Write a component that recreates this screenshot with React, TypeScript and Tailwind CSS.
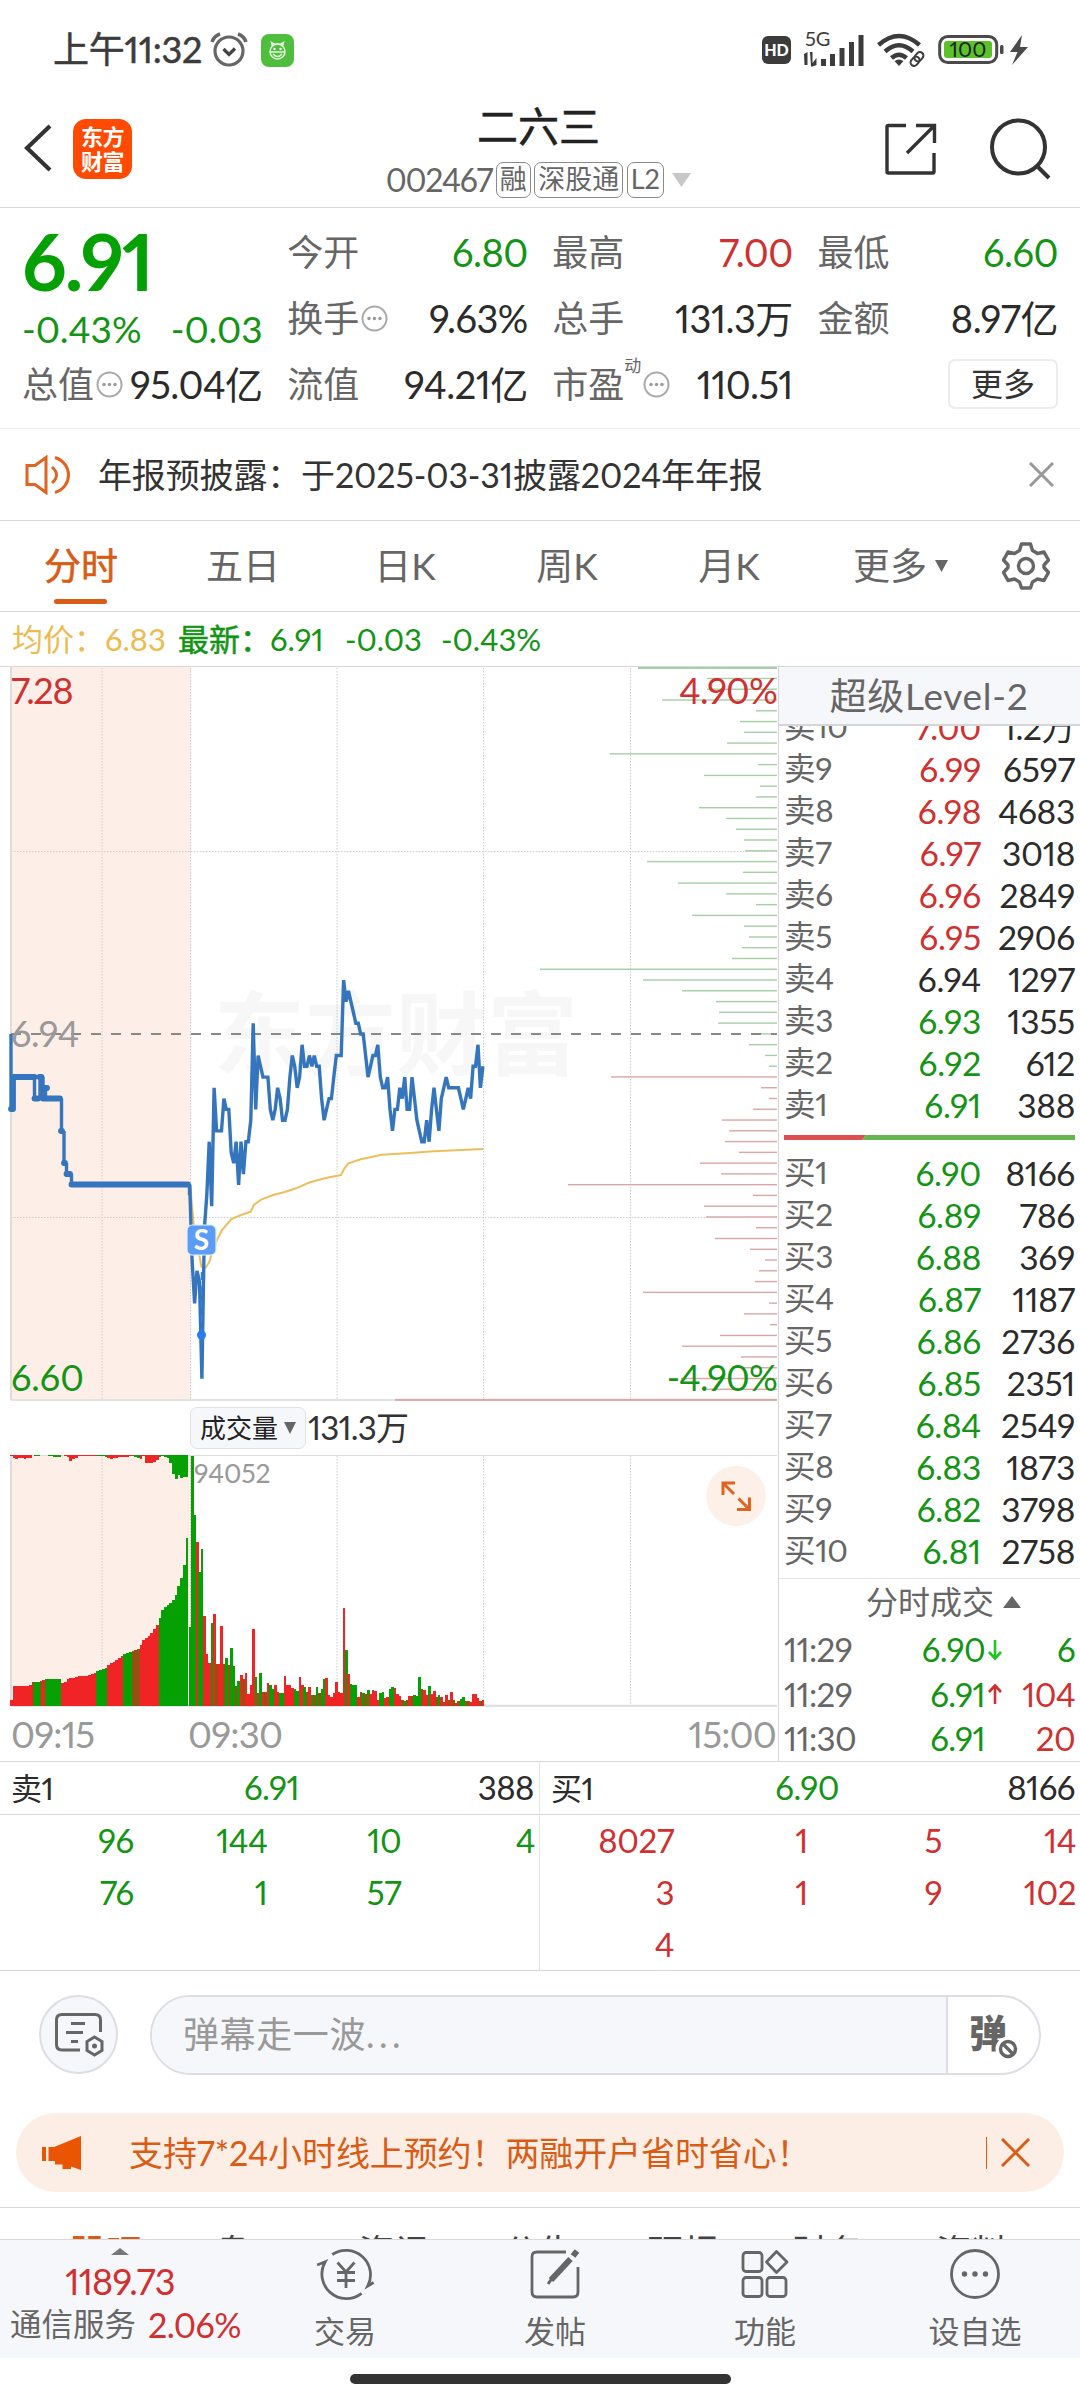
import type { ReactNode } from 'react'
import clsx from 'clsx'

type Tone = 'up' | 'down' | 'flat'

const TONE: Record<Tone, string> = {
  up: 'text-[#d0302f]',
  down: 'text-[#149414]',
  flat: 'text-[#2b2b2b]',
}

const UP = '#f02424'
const DOWN = '#04a004'
const MIXED = '#96500f'

// one price per minute from 09:30 to 11:30, in cents
const PRICES = [
  680, 673, 669, 672, 671, 662, 676, 679, 684, 678, 689, 685, 685, 685, 688, 687, 687, 683, 682, 684, 680, 684, 681, 684,
  684, 686, 695, 687, 692, 691, 690, 690, 690, 687, 686, 687, 689, 688, 686, 686, 687, 690, 692, 691, 689, 690, 693, 691,
  691, 692, 691, 692, 691, 691, 688, 686, 687, 688, 688, 690, 692, 692, 692, 699, 697, 698, 697, 696, 695, 695, 694, 694,
  692, 690, 691, 692, 692, 693, 690, 689, 689, 690, 687, 685, 687, 687, 689, 688, 690, 687, 687, 690, 688, 686, 685, 684,
  684, 686, 684, 687, 689, 687, 685, 688, 689, 690, 689, 689, 689, 689, 689, 688, 687, 688, 689, 688, 691, 691, 693, 689,
  691,
]

const AVERAGE =
  '190.4,1186.7 193.5,1223 198,1248 201.4,1266.7 205.6,1267.7 209.4,1261.7 212.8,1250 217,1240 222,1230 231.4,1219 241,1215 250.7,1211.7 253.8,1205 261.7,1199.3 273.8,1194.7 284,1192.3 296,1188.3 310,1182.3 327,1177.7 341,1175 344.4,1168.3 348.5,1163.3 361.6,1159 382,1154.7 410,1153 434,1151.3 461.4,1150 483,1149'

// volume at price, one bar per cent, top to bottom
const CHIPS = [
  139, 70, 70, 115, 21, 37, 33, 50, 167, 19, 73, 17, 21, 78, 51, 41, 33, 32, 130, 34, 99, 51, 21, 85, 33, 28, 35, 45,
  237, 134, 95, 61, 58, 59, 26, 28, 12, 8, 166, 16, 8, 24, 55, 48, 52, 38, 77, 56, 209, 24, 73, 71, 21, 62, 27, 12, 18,
  22, 134, 8, 33, 7, 57, 95, 36, 36, 96, 70, 382,
]

// r = up, g = down, b = overlap
const VOLUMES =
  'g79 g250 g191 r164 g134 g157 r90 r52 r43 g83 r92 b42 r42 r80 b42 g48 b41 g58 g40 b20 g25 r31 b27 r33 r12 r21 r77 g29 r13 g33 r14 b14 r23 g21 g17 r21 r14 g13 g13 r30 r21 r21 r18 g17 g15 r29 r21 g19 b14 r19 g11 b11 g19 b13 g17 g27 r28 r11 r9 r13 r24 r14 r13 r98 g56 r32 g22 g21 g21 r9 b14 g13 b12 g16 r12 r16 r15 r6 g13 g14 r8 r9 g17 g19 r18 r12 r10 b6 g5 b6 r10 b10 g11 g10 g29 b17 r16 r11 g20 r12 r15 b9 g11 r9 b4 r11 b6 r14 b6 r3 b5 g7 g9 b5 b5 r4 r12 r12 r8 b5 r6'
const PRE_VOLUMES =
  'r6 r20 r20 r20 r20 r20 r20 r21 b24 g24 g24 b25 r26 g27 g27 g27 g27 g27 g27 r23 r24 r27 r28 r28 r29 r30 r30 r30 r30 r31 r32 r33 g35 g36 g37 g38 r41 r43 r44 r46 r48 r50 g52 g53 g54 b55 b56 b57 r61 r66 r68 r70 r73 r77 r81 g88 g96 g99 g101 g103 g106 g111 g120 g128 g141 g168'
const PRE_UNMATCHED =
  'r1 r3 r4 r3 r3 r4 r3 r3 r0 g1 g1 g0 g0 g0 g1 g1 g2 g2 g2 r0 r1 r2 r6 r4 r3 r1 r1 r1 r1 r1 r1 r1 g1 g1 g1 g2 r3 r4 r3 r3 r2 r2 r2 r2 r1 r1 g2 g3 r4 r1 r8 r8 r8 r7 r5 g2 g1 g2 g3 g8 g19 g24 g20 g23 g22 g22'

const bars = (s: string) =>
  s.split(' ').map((b) => ({ fill: b[0] === 'r' ? UP : b[0] === 'g' ? DOWN : MIXED, h: Number(b.slice(1)) }))

const ASKS: [string, string, string, Tone][] = [
  ['卖10', '7.00', '1.2万', 'up'],
  ['卖9', '6.99', '6597', 'up'],
  ['卖8', '6.98', '4683', 'up'],
  ['卖7', '6.97', '3018', 'up'],
  ['卖6', '6.96', '2849', 'up'],
  ['卖5', '6.95', '2906', 'up'],
  ['卖4', '6.94', '1297', 'flat'],
  ['卖3', '6.93', '1355', 'down'],
  ['卖2', '6.92', '612', 'down'],
  ['卖1', '6.91', '388', 'down'],
]

const BIDS: [string, string, string, Tone][] = [
  ['买1', '6.90', '8166', 'down'],
  ['买2', '6.89', '786', 'down'],
  ['买3', '6.88', '369', 'down'],
  ['买4', '6.87', '1187', 'down'],
  ['买5', '6.86', '2736', 'down'],
  ['买6', '6.85', '2351', 'down'],
  ['买7', '6.84', '2549', 'down'],
  ['买8', '6.83', '1873', 'down'],
  ['买9', '6.82', '3798', 'down'],
  ['买10', '6.81', '2758', 'down'],
]

function StatusBar() {
  return (
    <div className="flex h-[100px] items-center pl-[53px] pr-[50px] text-[#3c3c3c]">
      <span className="-mt-[2px] text-[36px] tracking-[-0.2px] [-webkit-text-stroke:0.5px]">上午11:32</span>
      <svg className="ml-[8px] -mt-[1px]" width="38" height="36" viewBox="0 0 38 36" fill="none" stroke="#666" strokeWidth="3.2">
        <circle cx="19" cy="19" r="14" />
        <path d="M2 10Q4 4 10 2M36 10Q34 4 28 2" strokeWidth="3.6" />
        <path d="M13.500 17L19 22.500L25 16.500" stroke="#444" />
      </svg>
      <svg className="ml-[13px]" width="33" height="33" viewBox="0 0 33 33" fill="none">
        <rect width="33" height="33" rx="8" fill="#4fbe3c" />
        <g stroke="#e4f7df" strokeWidth="1.500">
          <path d="M11.500 12L10.500 8.500l3.500 2q2.500-1 5 0l3.500-2-1 3.500" />
          <circle cx="16.500" cy="17.500" r="7.500" />
          <path d="M9.500 18h14M12 20q4.500 5 9 0" />
        </g>
        <circle cx="13.500" cy="15" r="1.200" fill="#fff" />
        <circle cx="19.500" cy="15" r="1.200" fill="#fff" />
      </svg>
      <span className="ml-auto flex h-[28px] w-[29px] items-center justify-center rounded-[6px] bg-[#3c3c3c] text-[16px] font-black text-white">
        HD
      </span>
      <svg className="ml-[13px] overflow-visible" width="60" height="34" viewBox="0 0 60 34" fill="#3c3c3c">
        <text x="1" y="13" fontSize="20">
          5G
        </text>
        <path d="M0 21l3.500-2v13h-3zM6 19h2.500v11l4-5v7l-4 1.500H7zM17 26h5v7h-5zM26 21h5v12h-5zM35.500 15h5v18h-5zM45 9h5v24h-5zM54.500 2h5v31h-5z" />
      </svg>
      <svg className="ml-[13px]" width="48" height="34" viewBox="0 0 48 34" fill="none" stroke="#3c3c3c" strokeWidth="4.500">
        <path d="M1.500 12Q22 -6 42.500 12" />
        <path d="M8 18.500Q22 6 36 18.500" />
        <path d="M14.500 25Q22 18.500 29.500 25" />
        <path d="M22 33l-4.500-5q4.500-3 9 0z" fill="#3c3c3c" stroke="none" />
        <g strokeWidth="2" transform="rotate(-50 40 26)">
          <rect x="32" y="22.500" width="10" height="7" rx="3.500" />
          <rect x="38" y="22.500" width="10" height="7" rx="3.500" />
        </g>
      </svg>
      <svg className="ml-[13px]" width="92" height="32" viewBox="0 0 92 32">
        <rect x="1.700" y="2.500" width="57" height="26" rx="8" fill="#fff" stroke="#4a4a4a" strokeWidth="3" />
        <rect x="6" y="7" width="48" height="17" rx="3" fill="#5cc22c" />
        <rect x="62" y="11" width="3.500" height="9" rx="1.500" fill="#4a4a4a" />
        <text x="30" y="23" fontSize="21.500" textAnchor="middle" fill="#222">
          100
        </text>
        <path d="M84 1L72 18h7.500L74 31L90 13h-8z" fill="#4a4a4a" />
      </svg>
    </div>
  )
}

function Badge({ children }: { children: ReactNode }) {
  return (
    <span className="flex h-[36px] items-center rounded-[7px] border border-[#8a8a8a] px-[3px] text-[27px]">{children}</span>
  )
}

function Header() {
  return (
    <header className="flex h-[108px] items-center border-b border-[#d8d8d8] pl-[24px] pr-[27px]">
      <svg className="mt-[-11px]" width="28" height="48" viewBox="0 0 28 48" fill="none" stroke="#333" strokeWidth="4.200">
        <path d="M26 2L3 24L26 46" />
      </svg>
      <div className="ml-[21px] mt-[-9px] flex h-[60px] w-[59px] flex-col items-center justify-center rounded-[13px] bg-[#ff4a04] text-[22px] leading-[25px] font-bold tracking-[-0.5px] text-white">
        <span>东方</span>
        <span>财富</span>
      </div>
      <div className="mt-[-6px] flex flex-1 flex-col items-center gap-[4px] pl-[60px]">
        <h1 className="text-[41px] leading-[54px] text-[#222] [-webkit-text-stroke:0.5px]">二六三</h1>
        <div className="flex h-[44px] items-center gap-[3.500px] text-[#666]">
          <span className="text-[32px] tracking-[-1.2px]">002467</span>
          <Badge>融</Badge>
          <Badge>深股通</Badge>
          <Badge>L2</Badge>
          <svg className="ml-[5px]" width="19" height="14" viewBox="0 0 19 14">
            <path d="M0 0h19L9.500 14z" fill="#c8c8c8" />
          </svg>
        </div>
      </div>
      <svg className="mt-[-10px]" width="52" height="52" viewBox="0 0 52 52" fill="none" stroke="#333" strokeWidth="3.400">
        <path d="M21 2.500H3.500Q2 2.500 2 4v44.500q0 1.500 1.500 1.500h44q1.500 0 1.500-1.500V30" />
        <path d="M31 2.500h18.500V20M49 3L22 30" />
      </svg>
      <svg className="mt-[-10px] ml-[52px]" width="64" height="64" viewBox="0 0 64 64" fill="none" stroke="#333" strokeWidth="4">
        <circle cx="29.500" cy="30" r="26.500" />
        <path d="M48 49l12 12" />
      </svg>
    </header>
  )
}

function Dots() {
  return (
    <svg className="mx-[2px]" width="27" height="27" viewBox="0 0 27 27">
      <circle cx="13.500" cy="13.500" r="12" fill="none" stroke="#aaa" strokeWidth="2" />
      <circle cx="8" cy="13.500" r="1.700" fill="#999" />
      <circle cx="13.500" cy="13.500" r="1.700" fill="#999" />
      <circle cx="19" cy="13.500" r="1.700" fill="#999" />
    </svg>
  )
}

function Stat({ label, value, tone = 'flat', dots, sup }: { label: string; value: string; tone?: Tone; dots?: boolean; sup?: string }) {
  return (
    <div className="flex h-[66px] items-center">
      <span className="text-[36px] text-[#666]">{label}</span>
      {sup && <span className="-mt-[36px] text-[17px] text-[#666]">{sup}</span>}
      {dots && <Dots />}
      <span className={clsx('ml-auto text-[38px] tracking-[-0.5px]', TONE[tone])}>{value}</span>
    </div>
  )
}

function Summary() {
  return (
    <section className="grid h-[221px] grid-cols-4 gap-[24.500px] border-b border-[#ebebeb] pt-[11px] pl-[22px] pr-[22px]">
      <div className="text-[#04a004]">
        <div className="-mt-[2px] h-[90px] text-[78px] leading-[88px] font-bold tracking-[-2px]">6.91</div>
        <div className="flex h-[44px] items-center justify-between text-[37px] text-[#149414]">
          <span>-0.43%</span>
          <span>-0.03</span>
        </div>
        <Stat label="总值" value="95.04亿" dots />
      </div>
      <div>
        <Stat label="今开" value="6.80" tone="down" />
        <Stat label="换手" value="9.63%" dots />
        <Stat label="流值" value="94.21亿" />
      </div>
      <div>
        <Stat label="最高" value="7.00" tone="up" />
        <Stat label="总手" value="131.3万" />
        <Stat label="市盈" value="110.51" sup="动" dots />
      </div>
      <div>
        <Stat label="最低" value="6.60" tone="down" />
        <Stat label="金额" value="8.97亿" />
        <div className="flex h-[66px] items-center justify-end">
          <button className="h-[50px] w-[110px] rounded-[7px] border-2 border-[#ececec] text-[32px] leading-[44px] text-[#333]">更多</button>
        </div>
      </div>
    </section>
  )
}

function Notice() {
  return (
    <section className="flex h-[92px] items-center border-b border-[#d8d8d8] pl-[25px] pr-[26px]">
      <svg width="46" height="40" viewBox="0 0 46 40" fill="none" stroke="#de6420" strokeWidth="3">
        <path d="M2 10.500h8L21 2.500v35L10 29.500H2z" />
        <path d="M27 12q9 8 0 16M30 2.500c18 6 18 29 0 35" />
      </svg>
      <span className="-mt-[1px] ml-[27px] text-[34px] tracking-[-0.15px] text-[#333]">年报预披露：于2025-03-31披露2024年年报</span>
      <svg className="ml-auto" width="25" height="25" viewBox="0 0 25 25" stroke="#999" strokeWidth="3">
        <path d="M1 1l23 23M24 1L1 24" />
      </svg>
    </section>
  )
}

const PERIODS = ['分时', '五日', '日K', '周K', '月K']

function PeriodTabs() {
  return (
    <nav className="flex h-[91px] items-center border-b border-[#d8d8d8] text-[37px] text-[#666]">
      {PERIODS.map((p, i) => (
        <div
          key={p}
          className={clsx(
            'relative flex h-full w-[162px] items-center justify-center',
            i === 0 && 'text-[#d95c16] [-webkit-text-stroke:0.6px]',
          )}
        >
          {p}
          {i === 0 && <i className="absolute bottom-[7px] left-[54px] h-[5px] w-[53px] rounded-full bg-[#d95c16]" />}
        </div>
      ))}
      <div className="ml-[43px] flex items-center">
        更多
        <svg className="ml-[8px]" width="13" height="12" viewBox="0 0 13 12">
          <path d="M0 0h13L6.500 12z" fill="#666" />
        </svg>
      </div>
      <svg className="ml-auto mr-[30px]" width="48" height="48" viewBox="0 0 48 48" fill="none" stroke="#666" strokeWidth="3.400" strokeLinejoin="round">
        <path d="M19.500 2h9l2 6.500 5 3 6.500-1.500 4.500 8-4.500 5v2.500l4.500 5-4.500 8-6.500-1.500-5 3-2 6h-9l-2-6-5-3-6.500 1.500-4.500-8 4.500-5V23l-4.500-5 4.500-8 6.500 1.500 5-3z" />
        <circle cx="24" cy="24" r="7.500" />
      </svg>
    </nav>
  )
}

function PriceChart() {
  const line = PRICES.map((p, i) => `${(189.7 + i * 2.443).toFixed(1)},${(1034 + (694 - p) * 10.77).toFixed(1)}`).join(' ')
  return (
    <svg className="block" width="778" height="734" viewBox="0 667 778 734">
      <rect x="11" y="667" width="180" height="733" fill="#fdeee7" />
      <text x="214" y="1068" fontSize="91" fontWeight="700" fill="#f7f7f7">
        东方财富
      </text>
      <g stroke="#ccc" strokeDasharray="1.500 1.500">
        {[102, 190.5, 337, 483.5, 630.5].map((x) => (
          <path key={x} d={`M${x} 668V1399`} />
        ))}
        <path d="M11 851.500H777M11 1217.500H777" />
      </g>
      <path d="M11 667V1400" stroke="#ddd" strokeWidth="2" />
      <path d="M11 1400H777" stroke="#e2e2e2" strokeWidth="2" />
      {CHIPS.map((w, i) => (
        <rect
          key={i}
          x={777 - w}
          y={667.5 + i * 10.77 - (i === 68 ? 1 : 0.5)}
          width={w}
          height={i === 0 || i === 68 ? 2 : 1.4}
          fill={i < 38 ? '#a5cfa5' : '#dca6a6'}
        />
      ))}
      <path d="M11 1034H777" stroke="#888" strokeWidth="2" strokeDasharray="10 10" />
      <g fontSize="36" letterSpacing="-0.800">
        <text x="11" y="704" fill="#d0302f" letterSpacing="-1.300">7.28</text>
        <text x="777" y="704" fill="#d0302f" textAnchor="end">4.90%</text>
        <text x="11" y="1047" fill="#999" letterSpacing="-0.300">6.94</text>
        <text x="11" y="1391" fill="#149414" letterSpacing="0">6.60</text>
        <text x="777" y="1391" fill="#149414" textAnchor="end">-4.90%</text>
      </g>
      <polyline points={AVERAGE} fill="none" stroke="#ecbf5c" strokeWidth="2" />
      <g fill="none" stroke="#3575bd" strokeLinejoin="round">
        <polyline points={line} strokeWidth="3.400" strokeLinejoin="miter" strokeMiterlimit="2" />
        <path
          d="M11 1034V1109M34.500 1077V1098.500M40 1077V1098M43 1098V1077M45.500 1088V1098.500M61.500 1098.500V1131M64 1131V1163M66.500 1163V1174M71.500 1174V1184M189.500 1184V1195"
          strokeWidth="3.400"
        />
        <path
          d="M11 1109H13V1077H34.500M34.500 1098.500H38M39.500 1077H41.500M45 1088H47M43 1098.500H60M61 1131H62M64 1163H65M66.500 1174H70M71.500 1184.500H188"
          strokeWidth="5.800"
          strokeLinecap="round"
        />
      </g>
      <path d="M201.500 1272V1335" stroke="#2f7ff0" strokeWidth="1.500" strokeDasharray="8 6" />
      <circle cx="201.500" cy="1335" r="4.500" fill="#2a7bf0" />
      <rect x="187" y="1225" width="29" height="30" rx="5" fill="#5b9cf6" stroke="#e5effd" strokeWidth="1.200" />
      <text x="201.500" y="1250" fontSize="28" fontWeight="700" fill="#fff" textAnchor="middle">
        S
      </text>
    </svg>
  )
}

function VolumeChart() {
  return (
    <svg className="block" width="778" height="252" viewBox="0 1455 778 252">
      <rect x="11" y="1455" width="180" height="251" fill="#fdeee7" />
      <g stroke="#ccc" strokeDasharray="1.500 1.500">
        {[102, 190.5, 337, 483.5, 630.5].map((x) => (
          <path key={x} d={`M${x} 1456V1705`} />
        ))}
      </g>
      <path d="M11 1455.500H777" stroke="#ddd" />
      <path d="M11 1705.800H777" stroke="#ddd" strokeWidth="2" />
      <path d="M11 1455V1706" stroke="#ddd" strokeWidth="2" />
      <g shapeRendering="crispEdges">
        {bars(PRE_VOLUMES).map((b, i) => (
          <rect key={i} x={10 + i * 2.7} y={1706 - b.h} width="2.800" height={b.h} fill={b.fill} />
        ))}
        {bars(PRE_UNMATCHED).map((b, i) => (
          <rect key={i} x={10 + i * 2.7} y="1455" width="2.800" height={b.h} fill={b.fill} />
        ))}
        {bars(VOLUMES).map((b, i) => (
          <rect key={i} x={188.6 + i * 2.443} y={1706 - b.h} width="2.600" height={b.h} fill={b.fill} />
        ))}
      </g>
      <text x="194" y="1483" fontSize="26.500" fill="#999" letterSpacing="-0.100">
        94052
      </text>
      <circle cx="736" cy="1496" r="30" fill="#fdf0e9" />
      <g fill="none" stroke="#de6420" strokeWidth="3">
        <path d="M735 1483h-12v12M724 1484l10 10M737 1509.500h12.500v-12M748.500 1508.500l-10-10" />
      </g>
    </svg>
  )
}

function BookRow({ row }: { row: [string, string, string, Tone] }) {
  const [label, price, qty, tone] = row
  return (
    <div className="flex h-[42px] shrink-0 items-center pl-[5px] pr-[5px] text-[33.500px] tracking-[-0.3px]">
      <span className="w-[80px] text-[31.500px] text-[#666]">{label}</span>
      <span className={clsx('w-[117px] text-right', TONE[tone])}>{price}</span>
      <span className="flex-1 text-right text-[#2b2b2b]">{qty}</span>
    </div>
  )
}

function Trade({ time, price, qty, tone, dir }: { time: string; price: string; qty: string; tone: Tone; dir?: 'up' | 'down' }) {
  return (
    <div className="flex h-[44.500px] items-center pb-[1px] pl-[5px] pr-[5px] text-[33px] tracking-[-0.6px]">
      <span className="w-[80px] text-[#666]">{time}</span>
      <span className="w-[121px] text-right text-[#149414]">{price}</span>
      <svg className="ml-[3px]" width="14" height="22" viewBox="0 0 14 22" fill="none" strokeWidth="2.600">
        {dir === 'down' && <path d="M7 1v18M1 13l6 6.500 6-6.500" stroke="#22c322" />}
        {dir === 'up' && <path d="M7 21V3M1 9l6-6.500L13 9" stroke="#d0302f" />}
      </svg>
      <span className={clsx('flex-1 text-right', TONE[tone])}>{qty}</span>
    </div>
  )
}

function OrderBook() {
  return (
    <aside className="flex h-[1094px] w-[302px] flex-col border-l border-[#d4d6da]">
      <div className="h-[59px] shrink-0 border-b-2 border-[#d4d6da] bg-[#f6f7fa] pr-[1px] text-center text-[37px] leading-[57px] tracking-[0.7px] text-[#666]">
        超级Level-2
      </div>
      <div className="flex h-[400px] shrink-0 flex-col justify-end overflow-hidden">
        {ASKS.map((r) => (
          <BookRow key={r[0]} row={r} />
        ))}
      </div>
      <div className="h-[26px] shrink-0 px-[5px] pt-[9px]">
        <svg className="block" width="291" height="5" viewBox="0 0 291 5">
          <path d="M0 0H82L78 5H0z" fill="#db4f4f" />
          <path d="M82 0H291V5H78z" fill="#65b550" />
        </svg>
      </div>
      {BIDS.map((r) => (
        <BookRow key={r[0]} row={r} />
      ))}
      <div className="mt-[6px] flex h-[50px] shrink-0 items-center justify-center border-t border-[#e4e4e4] pb-[3px] pl-[28px] text-[32px] text-[#666]">
        分时成交
        <svg className="ml-[9px]" width="18" height="12" viewBox="0 0 18 12">
          <path d="M9 0L18 12H0z" fill="#666" />
        </svg>
      </div>
      <Trade time="11:29" price="6.90" qty="6" tone="down" dir="down" />
      <Trade time="11:29" price="6.91" qty="104" tone="up" dir="up" />
      <Trade time="11:30" price="6.91" qty="20" tone="up" />
    </aside>
  )
}

function ChartArea() {
  return (
    <section className="border-b border-[#d8d8d8]">
      <div className="flex h-[55px] items-center border-b border-[#d8d8d8] pl-[12px] text-[31px] whitespace-pre">
        <span className="w-[166px] text-[#ecbc50]">均价：6.83</span>
        <span className="w-[92px] text-[#149414] [-webkit-text-stroke:0.5px]">最新：</span>
        <span className="w-[75px] text-[#149414]">6.91</span>
        <span className="w-[96px] text-[#149414]">-0.03</span>
        <span className="text-[#149414]">-0.43%</span>
      </div>
      <div className="flex">
        <div className="w-[778px]">
          <PriceChart />
          <div className="flex h-[54px] items-center pl-[190px]">
            <div className="flex h-[42px] w-[116px] items-center justify-between rounded-[7px] border border-[#e0e2e6] bg-[#f6f7fa] pl-[9px] pr-[9px] text-[26px] text-[#222]">
              成交量
              <svg width="12" height="12" viewBox="0 0 12 12">
                <path d="M0 0h12L6 12z" fill="#666" />
              </svg>
            </div>
            <span className="ml-[2px] text-[33px] tracking-[-0.8px] text-[#333]">131.3万</span>
          </div>
          <VolumeChart />
          <div className="flex h-[54px] items-center pl-[11px] pr-[2px] text-[36.500px] tracking-[-0.8px] text-[#999]">
            <span className="w-[177px]">09:15</span>
            <span>09:30</span>
            <span className="ml-auto">15:00</span>
          </div>
        </div>
        <OrderBook />
      </div>
    </section>
  )
}

function Queue({ side, price, total, tone, orders }: { side: string; price: string; total: string; tone: Tone; orders: string[] }) {
  return (
    <div className="h-[208px] w-[540px]">
      <div className="flex h-[53px] items-center border-b border-[#d8d8d8] pl-[11px] pr-[5px] text-[33px] tracking-[-0.5px] text-[#2b2b2b]">
        <span className="w-[180px] text-[31px]">{side}</span>
        <span className="w-[108px] text-right text-[#149414]">{price}</span>
        <span className="flex-1 text-right">{total}</span>
      </div>
      <div className={clsx('-mt-[1px] grid grid-cols-4 pr-[4px] text-right text-[33px] leading-[52px] tracking-[-0.4px]', TONE[tone])}>
        {orders.map((o, i) => (
          <span key={i}>{o}</span>
        ))}
      </div>
    </div>
  )
}

function Comment() {
  return (
    <div className="flex h-[79px] items-center pl-[39px] pr-[39px]">
      <div className="flex h-[79px] w-[79px] items-center justify-center rounded-full border-2 border-[#dcdee3] bg-[#f6f7fa]">
        <svg className="ml-[1px]" width="50" height="46" viewBox="0 0 50 46" fill="none" stroke="#666" strokeWidth="3">
          <path d="M26 38H8q-5.500 0-5.500-5.500V8Q2.500 2.500 8 2.500h33q5.500 0 5.500 5.500v12" />
          <path d="M17 11.500h14M12 20.500h17M17 29.500h7" />
          <path d="M40.500 25l7.500 4.500v9L40.500 43 33 38.500v-9z" />
          <circle cx="40.500" cy="34" r="2.500" fill="#666" stroke="none" />
        </svg>
      </div>
      <div className="ml-[32px] flex h-[80px] flex-1 overflow-hidden rounded-full border-2 border-[#dcdee3]">
        <div className="flex-1 border-r-2 border-[#dcdee3] bg-[#f6f7fa] pl-[31px] text-[36px] leading-[75px] tracking-[0.6px] text-[#999]">
          弹幕走一波<span className="tracking-[4.5px]">...</span>
        </div>
        <div className="relative w-[91px] pl-[21px] text-[38px] leading-[70px] font-black text-[#666]">
          弹
          <svg className="absolute top-[39px] left-[47px]" width="26" height="26" viewBox="0 0 26 26" fill="#fff">
            <circle cx="13" cy="13" r="12.500" />
            <circle cx="13" cy="13" r="7.500" stroke="#666" strokeWidth="3.400" />
            <path d="M8 8l10 10" stroke="#666" strokeWidth="3.400" />
          </svg>
        </div>
      </div>
    </div>
  )
}

function Banner() {
  return (
    <div className="mx-[16px] mt-[39px] flex h-[79px] items-center rounded-full bg-[#fceee5] pl-[26px] pr-[34px] text-[#d95c16]">
      <svg width="40" height="34" viewBox="0 0 40 34" fill="#ea5504">
        <path d="M0 11h4v14H0zM6.500 11H12L39 0v34l-10-3.500V33h-8.500v-4.500H13V25H6.500z" />
      </svg>
      <span className="ml-[47px] text-[34px] tracking-[-0.1px]">支持7*24小时线上预约！两融开户省时省心！</span>
      <i className="ml-auto h-[32px] w-[1px] bg-[#d95c16]" />
      <svg className="ml-[14px]" width="29" height="29" viewBox="0 0 29 29" stroke="#d95c16" strokeWidth="3">
        <path d="M1 1l27 27M28 1L1 28" />
      </svg>
    </div>
  )
}

const SECTIONS = ['股吧', '盘口', '资讯', '公告', '研报', '财务', '资料']

function SectionTabs() {
  return (
    <div className="mt-[15px] flex h-[32px] justify-between overflow-hidden border-t border-[#d8d8d8] pt-[24px] pr-[72px] pl-[70px] text-[36px] leading-[40px] text-[#444]">
      {SECTIONS.map((s, i) => (
        <span key={s} className={i === 0 ? 'font-bold text-[#d95c16]' : ''}>
          {s}
        </span>
      ))}
    </div>
  )
}

function NavItem({ label, children }: { label: string; children: ReactNode }) {
  return (
    <div className="flex w-[210px] flex-col items-center pt-[8px] text-[31px] leading-[44px] text-[#666]">
      <svg className="mb-[9px] overflow-visible" width="56" height="52" viewBox="0 0 56 52" fill="none" stroke="#666" strokeWidth="2.800">
        {children}
      </svg>
      {label}
    </div>
  )
}

function BottomNav() {
  return (
    <nav className="flex h-[119px] border-t border-[#d8d8d8] bg-[#f6f7fa]">
      <div className="flex w-[240px] flex-col items-center pt-[8px]">
        <svg className="shrink-0" width="18" height="7" viewBox="0 0 18 7">
          <path d="M9 0L18 7H0z" fill="#777" />
        </svg>
        <span className="mt-[5px] text-[36px] leading-[43px] tracking-[-0.8px] text-[#d0302f]">1189.73</span>
        <div className="flex h-[43px] w-full items-center pl-[10px] whitespace-nowrap">
          <span className="text-[31.500px] text-[#666]">通信服务</span>
          <span className="ml-[12px] text-[34px] tracking-[-0.6px] text-[#d0302f]">2.06%</span>
        </div>
      </div>
      <NavItem label="交易">
        <path d="M15.300 6.500A24.500 24.500 0 0 1 50.800 38l5.800-3.500M44.600 45.300A24.500 24.500 0 0 1 8.200 13.800l-8 3.200" />
        <path d="M20.500 14.500L29 24l8.500-9.500M20 24.500h18M20 32.500h18M29 24v16" />
      </NavItem>
      <NavItem label="发帖">
        <path d="M39 4H10q-5 0-5 5v35q0 5 5 5h36q5 0 5-5V19" />
        <path d="M50 3L46 8M43.500 11L24 32" strokeWidth="6" />
        <path d="M26 29l-5 7" strokeWidth="3" />
      </NavItem>
      <NavItem label="功能">
        <rect x="6" y="4.500" width="19" height="19" rx="3" />
        <rect x="6" y="29.500" width="19" height="19" rx="3" />
        <rect x="30" y="29.500" width="19" height="19" rx="3" />
        <path d="M39.500 3.500L50 14 39.500 24.500 29.500 14z" strokeLinejoin="round" />
      </NavItem>
      <NavItem label="设自选">
        <circle cx="28" cy="26" r="23.500" />
        <g fill="#666" stroke="none">
          <circle cx="17.500" cy="26" r="2.700" />
          <circle cx="28" cy="26" r="2.700" />
          <circle cx="38.500" cy="26" r="2.700" />
        </g>
      </NavItem>
    </nav>
  )
}

export default function App() {
  return (
    <div className="h-[2400px] w-[1080px] overflow-hidden bg-white font-['Lato','Noto_Sans_CJK_SC',sans-serif] proportional-nums">
      <StatusBar />
      <Header />
      <Summary />
      <Notice />
      <PeriodTabs />
      <ChartArea />
      <section className="flex divide-x divide-[#e4e4e4] border-b border-[#d8d8d8]">
        <Queue side="卖1" price="6.91" total="388" tone="down" orders={['96', '144', '10', '4', '76', '1', '57']} />
        <Queue side="买1" price="6.90" total="8166" tone="up" orders={['8027', '1', '5', '14', '3', '1', '9', '102', '4']} />
      </section>
      <div className="pt-[24px]">
        <Comment />
        <Banner />
        <SectionTabs />
      </div>
      <BottomNav />
      <div className="mx-auto mt-[16px] h-[10px] w-[381px] rounded-full bg-[#333]" />
    </div>
  )
}
